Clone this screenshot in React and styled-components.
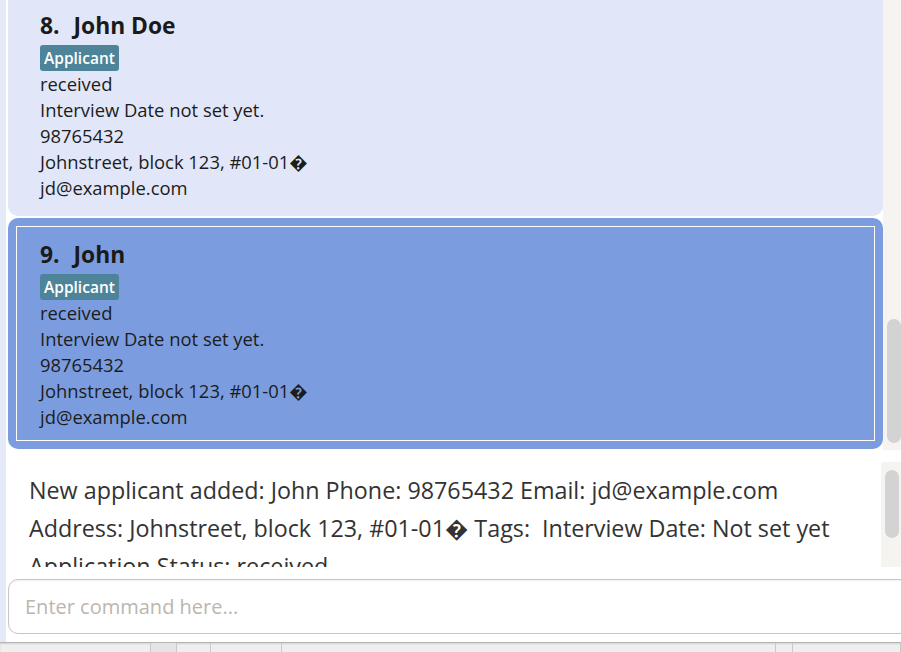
import React from "react";
import styled, { createGlobalStyle } from "styled-components";

const GlobalStyle = createGlobalStyle`
  html, body {
    margin: 0;
    padding: 0;
    overflow: hidden;
    background: #ffffff;
  }
  body {
    font-family: "Open Sans", "Noto Sans", sans-serif;
  }
`;

const Window = styled.div`
  width: 901px;
  height: 652px;
  display: flex;
  flex-direction: column;
  overflow: hidden;
`;

const Main = styled.div`
  display: flex;
  flex: 1;
  min-height: 0;
`;

const SideStrip = styled.div`
  width: 6px;
  flex-shrink: 0;
  background: #e4e9f8;
`;

const Content = styled.div`
  flex: 1;
  min-width: 0;
  display: flex;
  flex-direction: column;
  padding-left: 2px;
`;

const ListPanel = styled.div`
  height: 450px;
  flex-shrink: 0;
  display: flex;
`;

const ListViewport = styled.div`
  flex: 1;
  overflow: hidden;
`;

const CardList = styled.div`
  display: flex;
  flex-direction: column;
  gap: 2px;
  margin-top: -11px;
`;

const Card = styled.div`
  background: ${(p) => (p.selected ? "#7b9ddf" : "#e1e7f8")};
  border-radius: 10px;
  padding: ${(p) => (p.selected ? "8px" : "8px 8px 4px")};
`;

const CardInner = styled.div`
  border: 1px solid ${(p) => (p.selected ? "#ffffff" : "transparent")};
  padding: 13px 23px 10px;
  display: flex;
  flex-direction: column;
  align-items: flex-start;
`;

const Heading = styled.div`
  display: flex;
  gap: 14px;
  font-size: 22.8px;
  font-weight: 700;
  line-height: 30px;
  color: #1a1a1a;
  margin-bottom: 4px;
`;

const Badge = styled.span`
  height: 26px;
  line-height: 26px;
  padding: 0 4px;
  border-radius: 3px;
  background: #4e8499;
  color: #ffffff;
  font-size: 15.5px;
  font-weight: 600;
`;

const Line = styled.div`
  font-size: 18.4px;
  line-height: 26px;
  color: #1c1c1c;
  white-space: pre;
`;

const Track = styled.div`
  width: ${(p) => p.width}px;
  flex-shrink: 0;
  background: #f5f4f1;
  overflow: hidden;
`;

const Thumb = styled.div`
  width: 14px;
  margin-left: 4px;
  border-radius: 7px;
  background: #d3d3d3;
`;

const ResultPanel = styled.div`
  height: 105px;
  margin-top: 12px;
  flex-shrink: 0;
  display: flex;
`;

const ResultText = styled.div`
  flex: 1;
  overflow: hidden;
  padding: 9px 0 0 21px;
  font-size: 23.3px;
  line-height: 38px;
  color: #333333;
  white-space: pre-wrap;
`;

const CommandBox = styled.input`
  height: 55px;
  margin: 12px -12px 0 0;
  box-sizing: border-box;
  border: 1px solid #c6c6c6;
  border-radius: 10px;
  padding: 0 0 0 16px;
  font-family: inherit;
  font-size: 20px;
  color: #333333;
  background: #ffffff;
  outline: none;
  box-shadow: inset 0 1px 2px rgba(0, 0, 0, 0.06);

  &::placeholder {
    color: #bdb5ad;
  }
`;

const StatusBar = styled.div`
  height: 9px;
  flex-shrink: 0;
  display: flex;
  background: #efefef;
  border-top: 1px solid #b4b4b4;
  box-shadow: inset 0 1px 2px rgba(0, 0, 0, 0.12);
`;

const StatusCell = styled.div`
  width: ${(p) => (p.width ? `${p.width}px` : "auto")};
  flex: ${(p) => (p.width ? "none" : 1)};
  background: ${(p) => (p.dark ? "#e4e4e4" : "transparent")};
  border-right: 1px solid #c9c9c9;
`;

const applicants = [
  { id: 8, name: "John Doe" },
  { id: 9, name: "John", selected: true },
];

const ApplicantCard = ({ id, name, selected }) => (
  <Card selected={selected}>
    <CardInner selected={selected}>
      <Heading>
        <span>{id}.</span>
        <span>{name}</span>
      </Heading>
      <Badge>Applicant</Badge>
      <Line>received</Line>
      <Line>Interview Date not set yet.</Line>
      <Line>98765432</Line>
      <Line>Johnstreet, block 123, #01-01{"\uFFFD"}</Line>
      <Line>jd@example.com</Line>
    </CardInner>
  </Card>
);

export default function App() {
  return (
    <Window>
      <GlobalStyle />
      <Main>
        <SideStrip />
        <Content>
          <ListPanel>
            <ListViewport>
              <CardList>
                {applicants.map((a) => (
                  <ApplicantCard key={a.id} {...a} />
                ))}
              </CardList>
            </ListViewport>
            <Track width={18}>
              <Thumb style={{ marginTop: 319, height: 124 }} />
            </Track>
          </ListPanel>
          <ResultPanel>
            <ResultText>
              {"New applicant added: John Phone: 98765432 Email: jd@example.com\nAddress: Johnstreet, block 123, #01-01\uFFFD Tags:  Interview Date: Not set yet\nApplication Status: received"}
            </ResultText>
            <Track width={20}>
              <Thumb style={{ marginTop: 8, height: 68 }} />
            </Track>
          </ResultPanel>
          <CommandBox placeholder="Enter command here..." />
        </Content>
      </Main>
      <StatusBar>
        <StatusCell width={150} />
        <StatusCell width={25} dark />
        <StatusCell width={33} />
        <StatusCell width={70} />
        <StatusCell width={493} />
        <StatusCell width={16} />
        <StatusCell />
      </StatusBar>
    </Window>
  );
}
